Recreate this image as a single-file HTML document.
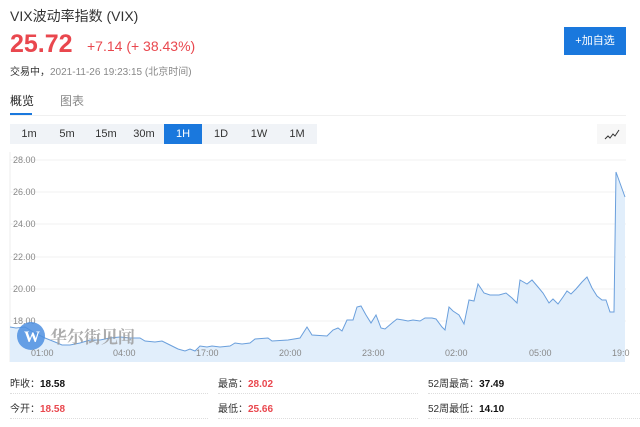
<!DOCTYPE html><html><head><meta charset="utf-8"><style>
body{margin:0;width:640px;height:427px;background:#fff;font-family:"Liberation Sans","Noto Sans CJK SC",sans-serif;position:relative;overflow:hidden;color:#333}
.a{position:absolute;white-space:nowrap}
.tf{position:absolute;top:124px;height:20px;line-height:20px;font-size:11px;color:#333;text-align:center;width:38px}
.st{font-size:10px;color:#333}
.st b{font-weight:bold;color:#111}
.st b.r{color:#e9474e}
.dl{position:absolute;height:0;border-top:1px dotted #ddd}
</style></head><body>
<div class="a" style="left:10px;top:6px;font-size:14px;color:#333">VIX波动率指数 (VIX)</div>
<div class="a" style="left:10px;top:30px;font-size:25px;font-weight:bold;color:#e9474e">25.72</div>
<div class="a" style="left:87px;top:38px;font-size:14px;color:#e9474e">+7.14 (+ 38.43%)</div>
<div class="a" style="left:10px;top:63px;font-size:10px;color:#333">交易中，<span style="color:#888">2021-11-26 19:23:15 (北京时间)</span></div>
<div class="a" style="left:564px;top:27px;width:62px;height:28px;background:#1a78dd;color:#fff;font-size:11px;line-height:28px;text-align:center">+加自选</div>
<div class="a" style="left:10px;top:92px;font-size:12px;color:#222">概览</div>
<div class="a" style="left:60px;top:92px;font-size:12px;color:#888">图表</div>
<div class="a" style="left:10px;top:113px;width:22px;height:2px;background:#1a78dd"></div>
<div class="a" style="left:10px;top:115px;width:616px;height:1px;background:#f0f0f0"></div>
<div class="a" style="left:10px;top:124px;width:307px;height:20px;background:#f0f3f7"></div>
<div class="tf" style="left:10px">1m</div><div class="tf" style="left:48px">5m</div><div class="tf" style="left:87px">15m</div><div class="tf" style="left:125px">30m</div>
<div class="tf" style="left:164px;background:#1a78dd;color:#fff">1H</div>
<div class="tf" style="left:202px">1D</div><div class="tf" style="left:240px">1W</div><div class="tf" style="left:278px">1M</div>
<div class="a" style="left:597px;top:124px;width:29px;height:20px;background:#f7f7f7"></div>
<svg class="a" style="left:0;top:0" width="640" height="427">
<polyline points="605,139 608,136 610,138 613,134 615,136 619,130" fill="none" stroke="#333" stroke-width="1"/>
<g stroke="#f2f2f2"><line x1="10" y1="160" x2="626" y2="160"/><line x1="10" y1="192" x2="626" y2="192"/><line x1="10" y1="224" x2="626" y2="224"/><line x1="10" y1="257" x2="626" y2="257"/><line x1="10" y1="289" x2="626" y2="289"/><line x1="10" y1="321" x2="626" y2="321"/></g>
<line x1="10" y1="152" x2="10" y2="362" stroke="#eee"/>
<g font-size="9" fill="#888" font-family="Liberation Sans"><text x="13" y="163">28.00</text><text x="13" y="195">26.00</text><text x="13" y="227">24.00</text><text x="13" y="260">22.00</text><text x="13" y="292">20.00</text><text x="13" y="324">18.00</text><text x="13" y="350">16.00</text></g>
<polygon fill="#e1eefb" points="10,362 10,327 16,328 25,327 35,333 45,338 55,342 62,345 70,345 80,343 90,340 100,340 110,338 120,337 130,338 140,338 145,341 155,342 162,341 170,345 178,349 185,351 190,349 195,351 200,346 207,347 212,346 220,347 230,346 235,343 242,344 250,343 255,339 268,338 272,341 288,340 300,338 307,327 312,335 327,336 333,330 338,328 342,331 347,320 353,320 357,307 361,306 366,315 371,323 376,315 381,328 385,329 392,323 397,319 403,320 408,321 413,320 420,321 425,318 432,318 436,319 442,327 445,330 449,307 453,311 459,315 464,324 469,300 474,301 478,284 484,293 490,295 499,295 506,293 512,298 517,303 520,280 527,284 532,280 538,287 543,293 549,303 553,299 558,304 563,297 567,291 571,294 576,289 582,282 587,277 592,288 597,296 602,300 606,300 610,312 614,312 616,172 625,197 625,362"/>
<polyline fill="none" stroke="#6a9fdc" stroke-width="1" points="10,327 16,328 25,327 35,333 45,338 55,342 62,345 70,345 80,343 90,340 100,340 110,338 120,337 130,338 140,338 145,341 155,342 162,341 170,345 178,349 185,351 190,349 195,351 200,346 207,347 212,346 220,347 230,346 235,343 242,344 250,343 255,339 268,338 272,341 288,340 300,338 307,327 312,335 327,336 333,330 338,328 342,331 347,320 353,320 357,307 361,306 366,315 371,323 376,315 381,328 385,329 392,323 397,319 403,320 408,321 413,320 420,321 425,318 432,318 436,319 442,327 445,330 449,307 453,311 459,315 464,324 469,300 474,301 478,284 484,293 490,295 499,295 506,293 512,298 517,303 520,280 527,284 532,280 538,287 543,293 549,303 553,299 558,304 563,297 567,291 571,294 576,289 582,282 587,277 592,288 597,296 602,300 606,300 610,312 614,312 616,172 625,197"/>
<circle cx="31" cy="336" r="14" fill="#4d8fe0" opacity="0.85"/>
<text x="24" y="342" font-size="16" font-weight="bold" fill="#fff" font-family="Liberation Serif">W</text>
<text x="50" y="343" font-size="17" fill="#999" font-weight="bold" font-family="Noto Serif CJK SC,serif" opacity="0.8">华尔街见闻</text>
<g font-size="9" fill="#888" font-family="Liberation Sans"><text x="31" y="356">01:00</text><text x="113" y="356">04:00</text><text x="196" y="356">17:00</text><text x="279" y="356">20:00</text><text x="362" y="356">23:00</text><text x="445" y="356">02:00</text><text x="529" y="356">05:00</text><text x="612" y="356">19:0</text></g>
</svg>
<div class="a st" style="left:10px;top:375px">昨收：<b>18.58</b></div>
<div class="a st" style="left:218px;top:375px">最高：<b class="r">28.02</b></div>
<div class="a st" style="left:428px;top:375px">52周最高：<b>37.49</b></div>
<div class="a st" style="left:10px;top:400px">今开：<b class="r">18.58</b></div>
<div class="a st" style="left:218px;top:400px">最低：<b class="r">25.66</b></div>
<div class="a st" style="left:428px;top:400px">52周最低：<b>14.10</b></div>
<div class="dl" style="left:10px;top:393px;width:198px"></div><div class="dl" style="left:218px;top:393px;width:200px"></div><div class="dl" style="left:428px;top:393px;width:212px"></div>
<div class="dl" style="left:10px;top:418px;width:198px"></div><div class="dl" style="left:218px;top:418px;width:200px"></div><div class="dl" style="left:428px;top:418px;width:212px"></div>
</body></html>
